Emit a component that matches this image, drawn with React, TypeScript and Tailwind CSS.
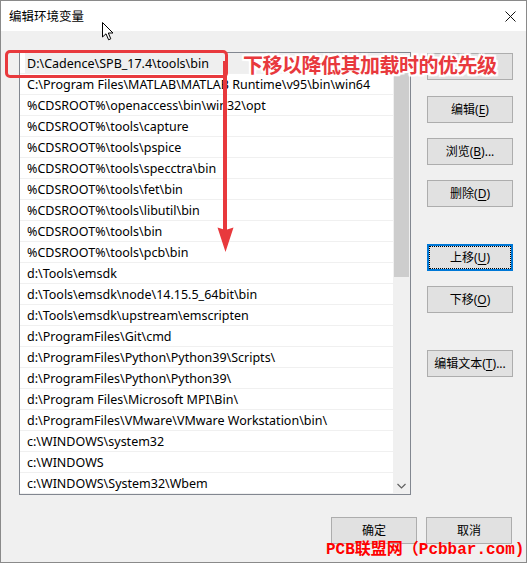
import React from "react";

const rows = [
  "D:\\Cadence\\SPB_17.4\\tools\\bin",
  "C:\\Program Files\\MATLAB\\MATLAB Runtime\\v95\\bin\\win64",
  "%CDSROOT%\\openaccess\\bin\\win32\\opt",
  "%CDSROOT%\\tools\\capture",
  "%CDSROOT%\\tools\\pspice",
  "%CDSROOT%\\tools\\specctra\\bin",
  "%CDSROOT%\\tools\\fet\\bin",
  "%CDSROOT%\\tools\\libutil\\bin",
  "%CDSROOT%\\tools\\bin",
  "%CDSROOT%\\tools\\pcb\\bin",
  "d:\\Tools\\emsdk",
  "d:\\Tools\\emsdk\\node\\14.15.5_64bit\\bin",
  "d:\\Tools\\emsdk\\upstream\\emscripten",
  "d:\\ProgramFiles\\Git\\cmd",
  "d:\\ProgramFiles\\Python\\Python39\\Scripts\\",
  "d:\\ProgramFiles\\Python\\Python39\\",
  "d:\\Program Files\\Microsoft MPI\\Bin\\",
  "d:\\ProgramFiles\\VMware\\VMware Workstation\\bin\\",
  "c:\\WINDOWS\\system32",
  "c:\\WINDOWS",
  "c:\\WINDOWS\\System32\\Wbem",
];

function Btn({
  label,
  u,
  rest,
  focused,
  className = "",
}: {
  label: string;
  u?: string;
  rest?: string;
  focused?: boolean;
  className?: string;
}) {
  return (
    <div
      className={
        "w-[86px] h-[27px] bg-[#e1e1e1] flex items-center justify-center text-[12px] text-black " +
        (focused ? "border-2 border-[#0078d7] " : "border border-[#adadad] ") +
        className
      }
    >
      <div
        className={
          focused
            ? "w-full h-full border border-dotted border-black flex items-center justify-center"
            : "flex items-center justify-center"
        }
      >
        <span>
          {label}
          {u !== undefined && (
            <>
              (<span className="underline underline-offset-2">{u}</span>){rest}
            </>
          )}
        </span>
      </div>
    </div>
  );
}

export default function App() {
  return (
    <div
      className="relative w-[527px] h-[563px] bg-[#f0f0f0] border border-[#8a8a8a] overflow-hidden"
      style={{ fontFamily: '"Noto Sans", "Noto Sans CJK SC", sans-serif' }}
    >
      {/* Title bar */}
      <div className="h-[30px] bg-white flex items-center justify-between pl-[8px] pr-[10px]">
        <span className="text-[12.5px] text-black" style={{ fontFamily: '"Noto Sans CJK SC", sans-serif' }}>
          编辑环境变量
        </span>
        <svg width="11" height="11" viewBox="0 0 11 11">
          <path d="M0.5 0.5 L10.5 10.5 M10.5 0.5 L0.5 10.5" stroke="#111" strokeWidth="1" />
        </svg>
      </div>

      {/* Body */}
      <div className="flex">
        {/* List */}
        <div className="ml-[18px] mt-[21px] w-[392px] h-[443px] border border-[#828790] bg-white flex overflow-hidden">
          <div className="flex-1 flex flex-col overflow-hidden">
            {rows.map((r, i) => (
              <div key={i} className="h-[21px] shrink-0 border-b border-[#f0f0f0] flex">
                <div
                  className={
                    "flex-1 ml-[5px] pl-[2px] pt-[3px] flex items-center text-[12.5px] text-black whitespace-nowrap " +
                    (i === 0 ? "bg-[#efefef]" : "")
                  }
                >
                  {r}
                </div>
              </div>
            ))}
          </div>
          <div className="w-[17px] bg-[#f0f0f0] flex flex-col">
            <div className="h-[17px] flex items-center justify-center">
              <svg width="9" height="6" viewBox="0 0 9 6">
                <path d="M0.5 5 L4.5 1 L8.5 5" stroke="#606060" strokeWidth="1.2" fill="none" />
              </svg>
            </div>
            <div className="h-[207px] ml-[1px] mr-[1px] bg-[#cdcdcd]" />
            <div className="flex-1" />
            <div className="h-[17px] flex items-center justify-center">
              <svg width="9" height="6" viewBox="0 0 9 6">
                <path d="M0.5 1 L4.5 5 L8.5 1" stroke="#606060" strokeWidth="1.2" fill="none" />
              </svg>
            </div>
          </div>
        </div>

        {/* Right buttons */}
        <div className="ml-[16px] mt-[22px] flex flex-col">
          <Btn label="" />
          <Btn label="编辑" u="E" className="mt-[16px]" />
          <Btn label="浏览" u="B" rest="..." className="mt-[15px]" />
          <Btn label="删除" u="D" className="mt-[15px]" />
          <Btn label="上移" u="U" focused className="mt-[37px]" />
          <Btn label="下移" u="O" className="mt-[15px]" />
          <Btn label="编辑文本" u="T" rest="..." className="mt-[37px]" />
        </div>
      </div>

      {/* Bottom buttons */}
      <div className="flex justify-end gap-[9px] pr-[14px] mt-[22px]">
        <Btn label="确定" />
        <Btn label="取消" />
      </div>

      {/* Annotations */}
      <div className="absolute left-[4px] top-[49px] w-[223px] h-[28px] border-[3px] border-[#e8393d] rounded-[5px]" />
      <div className="absolute left-[222px] top-[60px] w-[4px] h-[170px] bg-[#e8393d]" />
      <svg className="absolute left-[215px] top-[225px]" width="20" height="28" viewBox="0 0 20 28">
        <path d="M1.5 1.5 L9.5 4 L17.5 1.5 L9.5 26 Z" fill="#e8393d" />
      </svg>
      <div
        className="absolute left-[242px] top-[50px] text-[20px] leading-[28px] tracking-[-0.5px] text-[#e8393d] font-bold whitespace-nowrap"
        style={{
          fontFamily: '"Noto Sans CJK SC", sans-serif',
          textShadow:
            "2px 0 0 #fff, -2px 0 0 #fff, 0 2px 0 #fff, 0 -2px 0 #fff, 1px 1px 0 #fff, -1px -1px 0 #fff, 1px -1px 0 #fff, -1px 1px 0 #fff, 2px 2px 1px #fff, -2px -2px 1px #fff, 2px -2px 1px #fff, -2px 2px 1px #fff",
        }}
      >
        下移以降低其加载时的优先级
      </div>
      <div
        className="absolute left-[325px] top-[538px] text-[16px] leading-[22px] font-bold text-[#ff0000] whitespace-nowrap"
        style={{ fontFamily: '"Liberation Mono", "Noto Sans CJK SC", monospace' }}
      >
        PCB联盟网（Pcbbar.com)
      </div>

      {/* Cursor */}
      <svg className="absolute left-[100px] top-[20px]" width="14" height="21" viewBox="0 0 14 21">
        <path
          d="M1.5 1.5 L1.5 16 L5 12.8 L7.6 18.8 L9.8 17.8 L7.3 12 L12 12 Z"
          fill="#fff"
          stroke="#000"
          strokeWidth="1"
          strokeLinejoin="miter"
        />
      </svg>
    </div>
  );
}
